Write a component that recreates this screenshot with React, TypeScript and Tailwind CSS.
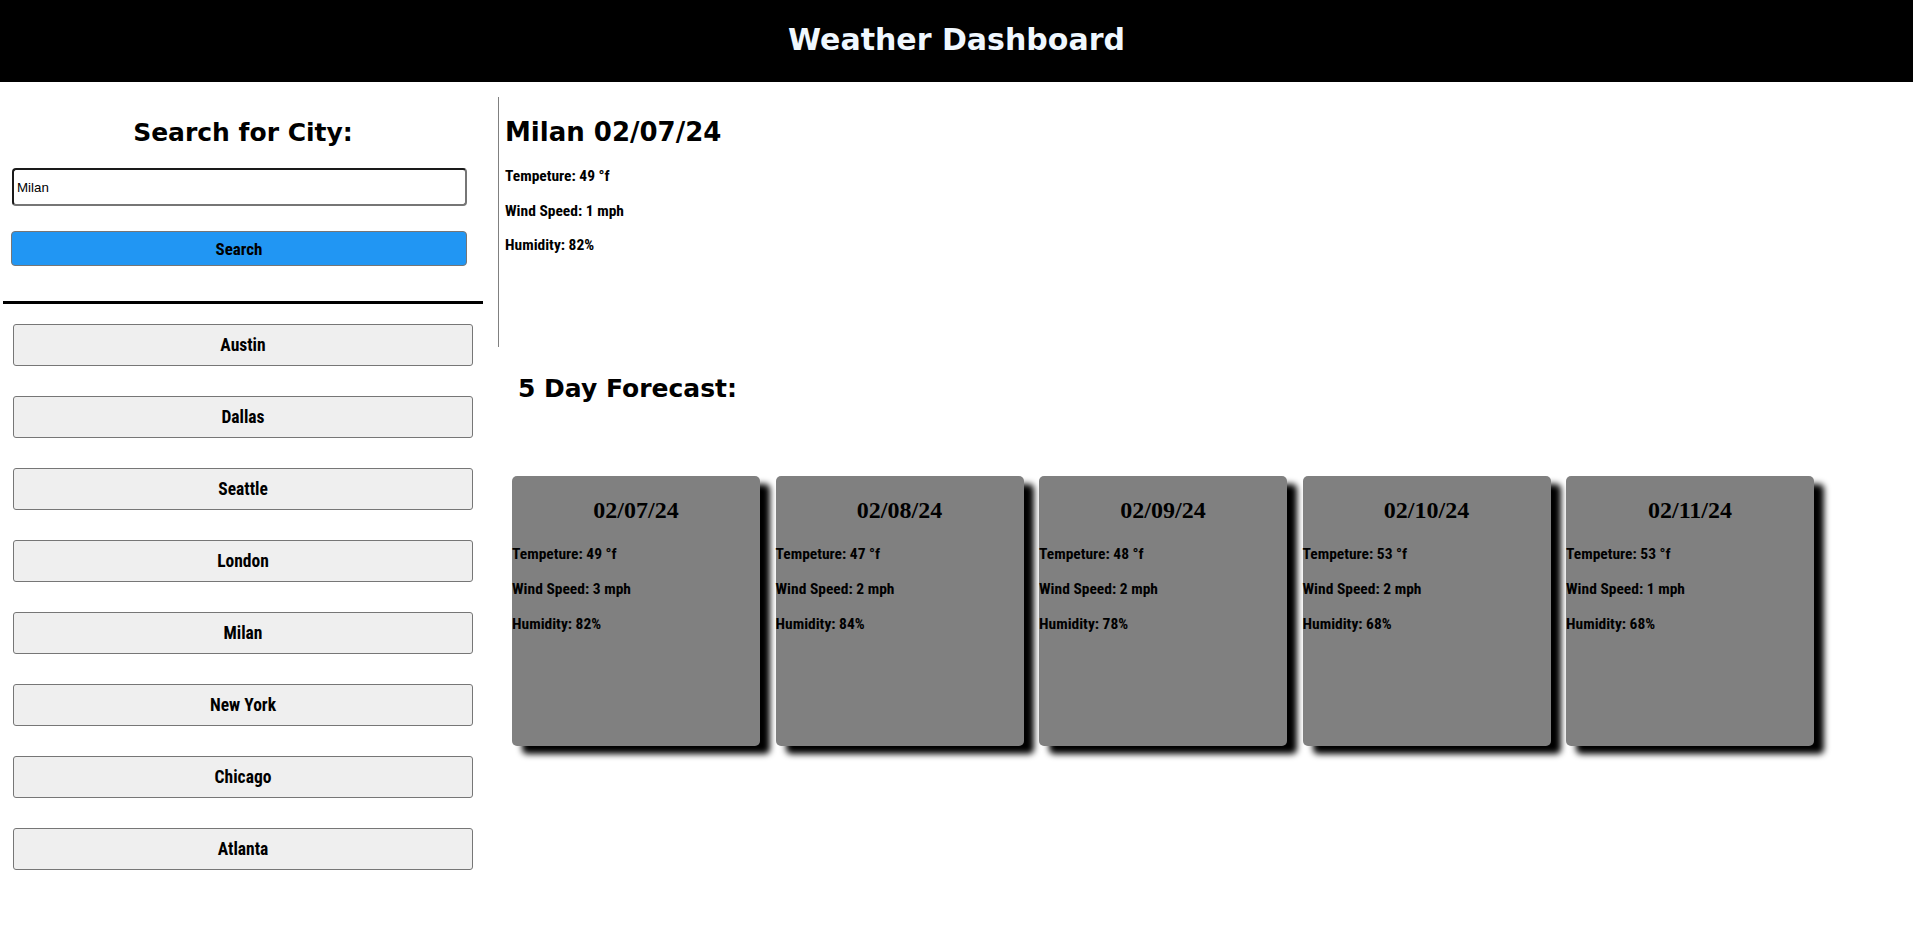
const cities = ['Austin', 'Dallas', 'Seattle', 'London', 'Milan', 'New York', 'Chicago', 'Atlanta']

const forecast = [
  { date: '02/07/24', temp: 49, wind: 3, humidity: 82 },
  { date: '02/08/24', temp: 47, wind: 2, humidity: 84 },
  { date: '02/09/24', temp: 48, wind: 2, humidity: 78 },
  { date: '02/10/24', temp: 53, wind: 2, humidity: 68 },
  { date: '02/11/24', temp: 53, wind: 1, humidity: 68 },
]

const heading = "font-['DejaVu_Sans',Verdana,sans-serif] font-bold text-[25px] leading-[30px]"
// no Impact here, so a condensed bold stands in for it
const narrow = "font-['Roboto_Condensed','DejaVu_Sans_Condensed',sans-serif] font-bold text-[15.5px] leading-[20px]"

export default function App() {
  return (
    <div className="min-h-screen bg-white text-black">
      {/* header */}
      <header className="h-[82px] bg-black flex items-center justify-center pb-[2px]">
        <h1 className="font-['DejaVu_Sans',Verdana,sans-serif] font-bold text-[30px] leading-[34px] text-[#f0f8ff]">
          Weather Dashboard
        </h1>
      </header>

      <div className="flex">
        {/* search + history */}
        <aside className="w-[486px] shrink-0 pt-[36px] pb-[40px]">
          <h2 className={`${heading} text-center`}>Search for City:</h2>
          <input
            defaultValue="Milan"
            className="block mt-[20px] ml-[12px] w-[455px] h-[38px] px-[3px] border-2 border-[#1a1a1a] border-r-[#767676] border-b-[#767676] rounded-[4px] bg-white font-['Liberation_Sans',Arial,sans-serif] text-[13.3px] outline-none"
          />
          <button className={`${narrow} text-[17px] block mt-[25px] ml-[11px] w-[456px] h-[35px] bg-[#2196f3] border border-[#767676] rounded-[4px]`}>
            Search
          </button>
          <div className="mt-[35px] ml-[3px] w-[480px] h-[3px] bg-black" />
          <div className="mt-[20px] flex flex-col gap-[30px]">
            {cities.map(city => (
              <button
                key={city}
                className={`${narrow} text-[17.5px] ml-[13px] w-[460px] h-[42px] bg-[#efefef] border border-[#767676] rounded-[3px]`}
              >
                {city}
              </button>
            ))}
          </div>
        </aside>

        {/* current + forecast */}
        <main className="flex-1">
          <section className="mt-[15px] ml-[12px] h-[250px] border-l border-[#808080] pl-[6px] pt-[20px]">
            <h2 className={`${heading} text-[26px]`}>Milan 02/07/24</h2>
            <div className={`${narrow} mt-[19px] flex flex-col gap-[14.5px]`}>
              <p>Tempeture: 49 °f</p>
              <p>Wind Speed: 1 mph</p>
              <p>Humidity: 82%</p>
            </div>
          </section>

          <h2 className={`${heading} mt-[27px] ml-[32px]`}>5 Day Forecast:</h2>

          <div className="mt-[72px] ml-[26px] flex gap-[15.5px]">
            {forecast.map(d => (
              <div
                key={d.date}
                className="w-[248px] h-[270px] bg-[#808080] rounded-[5px] shadow-[10px_8px_6px_#000] pt-[20px]"
              >
                <h3 className="font-['Liberation_Serif','Times_New_Roman',serif] font-bold text-[24px] leading-[28px] text-center">
                  {d.date}
                </h3>
                <div className={`${narrow} mt-[20px] flex flex-col gap-[15px]`}>
                  <p>Tempeture: {d.temp} °f</p>
                  <p>Wind Speed: {d.wind} mph</p>
                  <p>Humidity: {d.humidity}%</p>
                </div>
              </div>
            ))}
          </div>
        </main>
      </div>
    </div>
  )
}
